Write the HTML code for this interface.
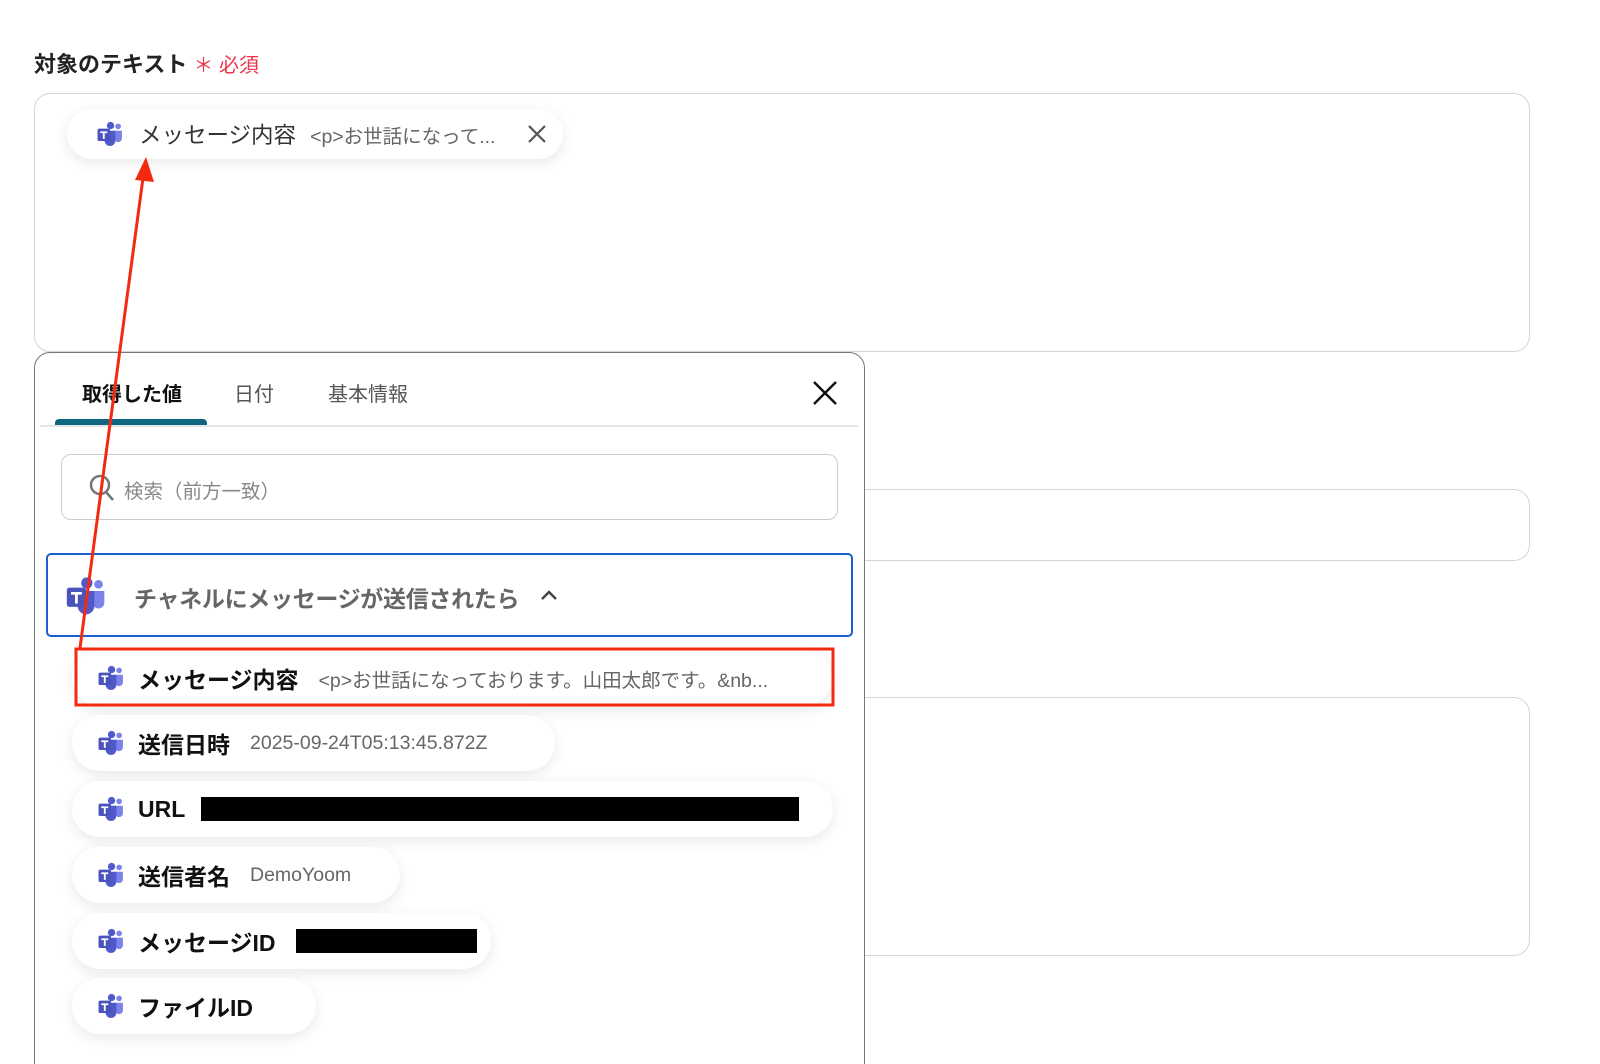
<!DOCTYPE html>
<html><head><meta charset="utf-8"><style>
*{box-sizing:border-box;margin:0;padding:0}
html,body{width:1600px;height:1064px;overflow:hidden}
body{background:#fff;position:relative;font-family:"Liberation Sans","Noto Sans CJK JP",sans-serif;color:#222}
.a{position:absolute}
.box{position:absolute;border:1.5px solid #cfd5dd;border-radius:16px;background:#fff}
.pill{position:absolute;left:72px;height:56px;border-radius:28px;background:#fff;box-shadow:0 4px 14px rgba(0,0,0,.09);display:flex;align-items:center;padding-left:26px;font-size:23px;font-weight:bold;color:#111;white-space:nowrap}
.pill svg{margin-right:14px}
.pill .v{font-weight:normal;color:#666;font-size:19.5px;margin-left:20px}
.blk{background:#000;height:24px;margin-left:16px}
</style></head><body>
<svg width="0" height="0" style="position:absolute"><defs>
<symbol id="t" viewBox="0 0 24 24">
<circle cx="19.5" cy="5" r="2.6" fill="#7b83eb"/>
<path d="M16 9h7v7a3.5 3.5 0 0 1-7 0z" fill="#7b83eb"/>
<circle cx="12.5" cy="4.2" r="3.4" fill="#5059c9"/>
<path d="M7 9h10v9a5 5 0 0 1-10 0z" fill="#5059c9"/>
<rect x="0.5" y="7" width="11.5" height="11.5" rx="1.5" fill="#4b53bc"/>
<path d="M3 9.6h6.5v1.6H7.1v5.3H5.4v-5.3H3z" fill="#fff"/>
</symbol></defs></svg>

<div class="a" style="left:34px;top:47px;font-size:22px;font-weight:bold;color:#222">対象のテキスト <span style="color:#f0334b;font-weight:normal;font-size:20px">＊ 必須</span></div>

<div class="box" style="left:34px;top:93px;width:1496px;height:259px"></div>
<div class="a" style="left:67px;top:109px;width:496px;height:50px;border-radius:25px;background:#fff;box-shadow:0 4px 14px rgba(0,0,0,.09);display:flex;align-items:center;padding-left:30px;white-space:nowrap">
<svg width="26" height="26"><use href="#t"/></svg>
<span style="font-size:22.5px;color:#333;margin-left:16px">メッセージ内容</span>
<span style="font-size:19.5px;color:#666;margin-left:14px">&lt;p&gt;お世話になって...</span>
<svg style="position:absolute;left:461px;top:16px" width="18" height="18"><path d="M1 1l16 16M17 1L1 17" stroke="#555" stroke-width="2.2"/></svg>
</div>

<div class="box" style="left:862px;top:489px;width:668px;height:72px;border-left:none;border-radius:0 16px 16px 0"></div>
<div class="box" style="left:862px;top:697px;width:668px;height:259px;border-left:none;border-radius:0 16px 16px 0"></div>

<div class="a" style="left:34px;top:352px;width:831px;height:740px;border:1.5px solid #777;border-radius:16px;background:#fff"></div>
<div class="a" style="left:82px;top:378px;font-size:20px;font-weight:bold;color:#111">取得した値</div>
<div class="a" style="left:234px;top:378px;font-size:20px;color:#555">日付</div>
<div class="a" style="left:328px;top:378px;font-size:20px;color:#555">基本情報</div>
<svg class="a" style="left:813px;top:381px" width="24" height="24"><path d="M1 1l22 22M23 1L1 23" stroke="#111" stroke-width="2.5"/></svg>
<div class="a" style="left:55px;top:419px;width:152px;height:6px;background:#0f6680;border-radius:4px 4px 0 0"></div>
<div class="a" style="left:40px;top:425px;width:818px;height:1.5px;background:#e2e4e8"></div>
<div class="a" style="left:61px;top:454px;width:777px;height:66px;border:1.5px solid #ccc;border-radius:10px"></div>
<svg class="a" style="left:88px;top:473px" width="28" height="30"><circle cx="12" cy="12" r="9" fill="none" stroke="#777" stroke-width="2.5"/><path d="M18 19l7 8" stroke="#777" stroke-width="2.5"/></svg>
<div class="a" style="left:124px;top:475px;font-size:19.5px;color:#888">検索（前方一致）</div>

<div class="a" style="left:46px;top:553px;width:807px;height:84px;border:2.5px solid #1a5fd0;border-radius:5px"></div>
<svg class="a" style="left:65px;top:576px" width="42" height="40"><use href="#t"/></svg>
<div class="a" style="left:134px;top:580px;font-size:23px;font-weight:bold;color:#666;letter-spacing:-0.3px">チャネルにメッセージが送信されたら</div>
<svg class="a" style="left:540px;top:588px" width="18" height="14"><path d="M2 11l7-7 7 7" fill="none" stroke="#444" stroke-width="2.5"/></svg>

<div class="pill" style="top:650px;width:760px"><svg width="26" height="26"><use href="#t"/></svg>メッセージ内容<span class="v">&lt;p&gt;お世話になっております。山田太郎です。&amp;nb...</span></div>
<div class="pill" style="top:715px;width:483px"><svg width="26" height="26"><use href="#t"/></svg>送信日時<span class="v">2025-09-24T05:13:45.872Z</span></div>
<div class="pill" style="top:781px;width:761px"><svg width="26" height="26"><use href="#t"/></svg>URL<span class="blk" style="width:598px"></span></div>
<div class="pill" style="top:847px;width:328px"><svg width="26" height="26"><use href="#t"/></svg>送信者名<span class="v">DemoYoom</span></div>
<div class="pill" style="top:913px;width:419px"><svg width="26" height="26"><use href="#t"/></svg>メッセージID<span class="blk" style="width:181px;margin-left:20px"></span></div>
<div class="pill" style="top:978px;width:244px"><svg width="26" height="26"><use href="#t"/></svg>ファイルID</div>

<svg class="a" style="left:0;top:0" width="1600" height="1064">
<rect x="76" y="649" width="757" height="56" fill="none" stroke="#f42a10" stroke-width="3"/>
<line x1="80" y1="648" x2="143" y2="178" stroke="#f42a10" stroke-width="3"/>
<path d="M135 180 L146 157 L154 182 Z" fill="#f42a10"/>
</svg>
</body></html>
